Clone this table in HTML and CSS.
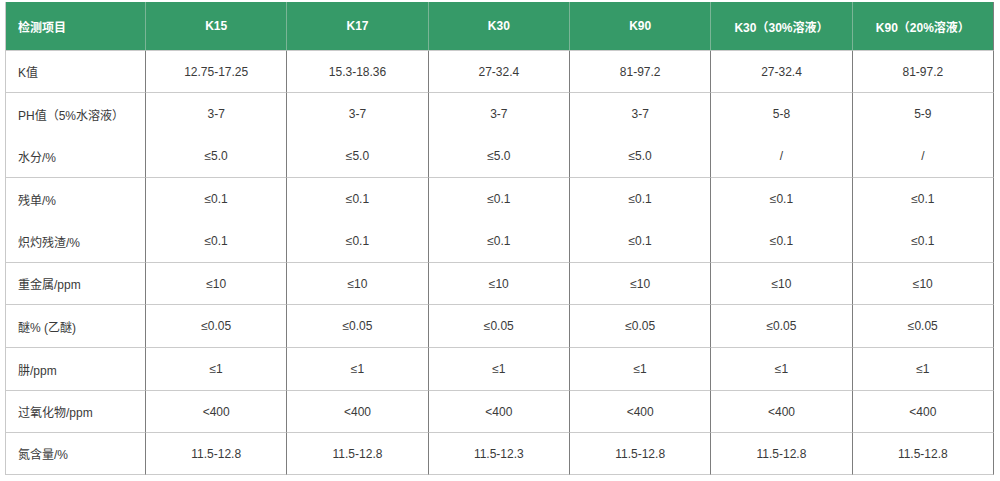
FILE: index.html
```html
<!DOCTYPE html>
<html lang="zh">
<head>
<meta charset="utf-8">
<link rel="stylesheet" href="styles.css">
</head>
<body>
<table class="spec">
  <colgroup>
    <col class="c-first">
    <col><col><col><col><col><col>
  </colgroup>
  <thead>
    <tr class="head">
      <th class="first">检测项目</th>
      <th>K15</th>
      <th>K17</th>
      <th>K30</th>
      <th>K90</th>
      <th>K30（30%溶液）</th>
      <th>K90（20%溶液）</th>
    </tr>
  </thead>
  <tbody>
    <tr class="r42"><td class="first">K值</td><td>12.75-17.25</td><td>15.3-18.36</td><td>27-32.4</td><td>81-97.2</td><td>27-32.4</td><td>81-97.2</td></tr>
    <tr class="r42 join"><td class="first">PH值（5%水溶液）</td><td>3-7</td><td>3-7</td><td>3-7</td><td>3-7</td><td>5-8</td><td>5-9</td></tr>
    <tr class="r43"><td class="first">水分/%</td><td>≤5.0</td><td>≤5.0</td><td>≤5.0</td><td>≤5.0</td><td>/</td><td>/</td></tr>
    <tr class="r42 join"><td class="first">残单/%</td><td>≤0.1</td><td>≤0.1</td><td>≤0.1</td><td>≤0.1</td><td>≤0.1</td><td>≤0.1</td></tr>
    <tr class="r43"><td class="first">炽灼残渣/%</td><td>≤0.1</td><td>≤0.1</td><td>≤0.1</td><td>≤0.1</td><td>≤0.1</td><td>≤0.1</td></tr>
    <tr class="r42"><td class="first">重金属/ppm</td><td>≤10</td><td>≤10</td><td>≤10</td><td>≤10</td><td>≤10</td><td>≤10</td></tr>
    <tr class="r43"><td class="first">醚% (乙醚)</td><td>≤0.05</td><td>≤0.05</td><td>≤0.05</td><td>≤0.05</td><td>≤0.05</td><td>≤0.05</td></tr>
    <tr class="r43"><td class="first">肼/ppm</td><td>≤1</td><td>≤1</td><td>≤1</td><td>≤1</td><td>≤1</td><td>≤1</td></tr>
    <tr class="r42"><td class="first">过氧化物/ppm</td><td>&lt;400</td><td>&lt;400</td><td>&lt;400</td><td>&lt;400</td><td>&lt;400</td><td>&lt;400</td></tr>
    <tr class="r42"><td class="first">氮含量/%</td><td>11.5-12.8</td><td>11.5-12.8</td><td>11.5-12.3</td><td>11.5-12.8</td><td>11.5-12.8</td><td>11.5-12.8</td></tr>
  </tbody>
</table>
</body>
</html>
```

FILE: styles.css
```css
html, body {
  margin: 0;
  padding: 0;
  background: #ffffff;
}

body {
  padding: 2px 0 0 5px;
  font-family: "Liberation Sans", Arial, "Noto Sans CJK SC", sans-serif;
  font-size: 12px;
  color: #3a3a3a;
}

.spec {
  border-collapse: separate;
  border-spacing: 0;
  table-layout: fixed;
  width: 989px;
  border-left: 1px solid #c9c9c9;
}

.c-first {
  width: 140px;
}

.spec th,
.spec td {
  padding: 0;
  text-align: center;
  vertical-align: middle;
  border-right: 1px solid #7d7d7d;
  border-bottom: 1px solid #cbcbcb;
  white-space: nowrap;
}

.spec th {
  background: #369a68;
  color: #ffffff;
  font-weight: bold;
  height: 48px;
  border-right-color: #7ab596;
  border-bottom-color: #cbcbcb;
}

.spec th:last-child {
  border-right-color: #7d7d7d;
}

.spec .first {
  text-align: left;
  padding-left: 12px;
}

.r42 td {
  height: 41px;
}

.r43 td {
  height: 42px;
}

.join td {
  border-bottom: none;
  height: 42px;
}
```
